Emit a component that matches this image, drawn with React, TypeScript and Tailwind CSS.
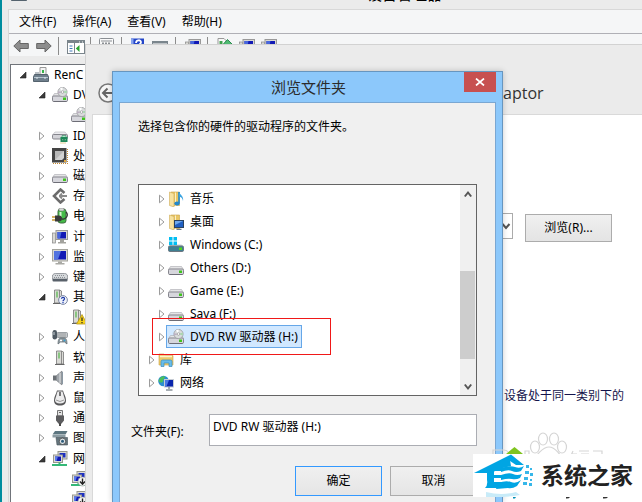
import type { ReactNode } from "react";

type TreeItem = {
  label: string;
  icon: ReactNode;
  level: number;
  state?: "open" | "closed";
};

type FolderItem = {
  label: string;
  icon: ReactNode;
  root?: boolean;
  selected?: boolean;
};

function Icon({ children }: { children: ReactNode }) {
  return (
    <svg viewBox="0 0 16 16" className="w-4 h-4 shrink-0" aria-hidden="true">
      {children}
    </svg>
  );
}

const driveBody = (
  <>
    <path d="M2.5 6.5h11l2 3H.5z" fill="#e4e4e6" stroke="#a9a9ae" strokeWidth=".6" />
    <rect x=".5" y="9" width="15" height="5.500" rx="1.2" fill="#d6d6dc" stroke="#85858d" />
    <path d="M1.5 14.500h13" stroke="#6d6d76" />
    <rect x="11" y="10.5" width="3" height="2.5" fill="#3fc41c" />
  </>
);

const HardDrive = () => <Icon>{driveBody}</Icon>;

const DiscDrive = () => (
  <Icon>
    {driveBody}
    <circle cx="10.5" cy="5" r="4.6" fill="#d9dcdc" stroke="#9a9a9e" strokeWidth=".8" />
    <path d="M10.5 5 8 1.4a4.4 4.4 0 0 1 2.5-.8z" fill="#fff" />
    <path d="M10.5 5l4.1-1.6a4.4 4.4 0 0 1 0 3z" fill="#a9d8b0" />
    <path d="M10.5 5 6.4 6.6a4.4 4.4 0 0 1-.2-2.4z" fill="#bcaec2" />
    <circle cx="10.5" cy="5" r="1.3" fill="#fff" stroke="#888" strokeWidth=".6" />
  </Icon>
);

const WindowsDrive = () => (
  <Icon>
    <path d="M2.5 7.5h11l2 2H.5z" fill="#cbd4d8" />
    <rect x=".5" y="9" width="15" height="5.5" rx="1.2" fill="#3f7f92" stroke="#6d7780" />
    <rect x="11" y="10.5" width="3" height="2.5" fill="#55d81c" />
    <path d="M1 0h3.500v3.500H1zM5.500 0H9v3.500H5.500zM1 4.500h3.500V8H1zM5.500 4.500H9V8H5.500z" fill="#00bdf2" />
  </Icon>
);

const ComputerRoot = () => (
  <Icon>
    <path d="M7 .5h6V9H7z" fill="#f4f4f4" stroke="#999" />
    <path d="M10 3v3" stroke="#36b34a" strokeWidth="2" />
    <path d="M2 5h4v3H2z" fill="#b9bfc4" />
    <path d="M1.500 7.500h13l1 2.500v4.500H.5V10z" fill="#6f7f8c" stroke="#55636e" />
    <path d="M1 10.500h14" stroke="#b5c4cf" />
    <path d="M4 10v2M12 10v2" stroke="#dfe7ec" />
  </Icon>
);

const IdeController = () => (
  <Icon>
    <path d="M3 4h10l2.500 3H.5z" fill="#ececef" stroke="#b6b6ba" strokeWidth=".6" />
    <rect x=".5" y="6.500" width="15" height="4.500" rx="1.200" fill="#d3d3d8" stroke="#85858c" />
    <rect x="8.500" y="9" width="7" height="5" fill="#1d8a59" />
    <path d="M10 9V7.500h4V9M10 11h1.500v1.500H10zM12.500 11H14v1.500h-1.500z" fill="#a9e8c6" stroke="#1d6f4a" strokeWidth=".5" />
    <path d="M9 14.500v1M11 14.500v1M13 14.500v1" stroke="#c59a2d" />
  </Icon>
);

const Processor = () => (
  <Icon>
    <path d="M15.500 1v15M1 15.500h15" fill="none" stroke="#c58a32" strokeDasharray="1 1" />
    <rect x="0" y="0" width="14.500" height="14.500" fill="#444" />
    <path d="M3 3h9v7l-2 2H3z" fill="#d2d2d2" />
    <path d="M3 3h9L3 12z" fill="#b8b8b8" />
    <path d="M12 12h2v2h-2z" fill="#e0a53a" />
  </Icon>
);

const Storage = () => (
  <Icon>
    <path d="M12.500 5 8.500 1.500 2 8l6.500 6.500 4-3.500" fill="none" stroke="#6c6c6c" strokeWidth="2.600" />
    <path d="M7 8h8M7.500 8 10 5.500M7.500 8l2.500 2.500" fill="none" stroke="#8b8b8b" strokeWidth="1.800" />
  </Icon>
);

const Battery = () => (
  <Icon>
    <rect x="6" y="1" width="8" height="14" rx="2.500" fill="#45bb48" stroke="#3d6a3e" />
    <rect x="7" y="0" width="5" height="3" rx="1" fill="#d8dcd8" stroke="#777" strokeWidth=".6" />
    <path d="M8.500 4v5" stroke="#d5f7d0" strokeWidth="2" />
    <path d="M14 4c3 3 0 8-4 7" fill="none" stroke="#333" strokeWidth="1.300" />
    <path d="M3 7.500h4a3 3 0 0 1 0 6H3z" fill="#3a3a3a" />
    <path d="M0 9h3M0 12h3" stroke="#c69b33" strokeWidth="1.400" />
  </Icon>
);

const Monitor = () => (
  <Icon>
    <rect x=".5" y=".5" width="15" height="11.500" fill="#d9d9d4" stroke="#a3a39c" />
    <rect x="2" y="2" width="12" height="8.500" fill="#1119b5" />
    <path d="M2 2h7L6 10.500H2z" fill="#5273e0" />
    <path d="M6 12.500h4V14h2.500v1.500h-9V14H6z" fill="#a9a9a4" />
  </Icon>
);

const Desktop = () => (
  <Icon>
    <rect x=".5" y="4" width="3" height="10" fill="#d9d9d4" stroke="#888" strokeWidth=".7" />
    <rect x="4" y="1.500" width="11.500" height="9" fill="#d9d9d4" stroke="#999" />
    <rect x="5.500" y="3" width="8.500" height="6.500" fill="#1119b5" />
    <path d="M5.500 3h4L8 9.500H5.500z" fill="#4666dd" />
    <path d="M8 11h4v2h2v1.500H6V13h2z" fill="#a3a39e" />
  </Icon>
);

const Keyboard = () => (
  <Icon>
    <path d="M3.500 4.500h9a3 3 0 0 1 3 4v1.500H.5V8.500a3 3 0 0 1 3-4z" fill="#d6d9dc" stroke="#84888d" strokeWidth=".8" />
    <path d="M3 6.500h10M2 8.500h12" stroke="#8c9196" strokeDasharray="1 1" />
    <path d="M.5 10h15v1.500q0 1-1 1h-13q-1 0-1-1z" fill="#59616a" />
  </Icon>
);

const tower = (
  <>
    <path d="M4.500 1h5l2 1v12h-7z" fill="#dadad6" stroke="#777" strokeWidth=".8" />
    <path d="M9.500 1v13" stroke="#777" strokeWidth=".8" />
    <path d="M7 2.500v6" stroke="#52b848" strokeWidth="1.200" />
    <path d="M3 14.500h9.500" stroke="#666" />
  </>
);

const UnknownDevice = () => (
  <Icon>
    <g transform="translate(-2 0)">{tower}</g>
    <circle cx="11" cy="11" r="4.400" fill="#eef2fb" stroke="#7d88a5" />
    <path d="M9.500 9.800c0-2 3.200-1.800 3 0 0 1.200-1.500 1-1.500 2.400M11 13v1.200" fill="none" stroke="#1c39a8" strokeWidth="1.200" />
  </Icon>
);

const WarningDevice = () => (
  <Icon>
    <g transform="translate(-2 0)">{tower}</g>
    <path d="M11 5.500 16 15H5.500z" fill="#f6d21b" stroke="#b79512" strokeWidth=".8" />
    <path d="M11 8.500v3.500M11 13v1.200" stroke="#222" strokeWidth="1.200" />
  </Icon>
);

const SoftwareDevice = () => <Icon>{tower}</Icon>;

const HumanInterface = () => (
  <Icon>
    <rect x="5" y="3.500" width="10.500" height="5" rx="1" fill="#c4c8cb" stroke="#7d8388" strokeWidth=".7" />
    <path d="M6.500 5h8M6.500 7h8" stroke="#777" strokeDasharray="1 1" />
    <rect x=".5" y="1" width="4.500" height="9.500" rx="2.200" fill="#4f5a63" />
    <path d="M2 3v3" stroke="#c9d2d8" />
    <path d="M6 15c0-4 1-6 2.500-6h4c1.500 0 2.500 2 2.500 6l-2.500-2h-4z" fill="#8e999f" stroke="#59646b" strokeWidth=".7" />
    <path d="M9 10.500v2M8 11.500h2" stroke="#fff" />
    <circle cx="12.500" cy="11.500" r=".9" fill="#35a2d6" />
  </Icon>
);

const Speaker = () => (
  <Icon>
    <path d="M1 5.500h3.500v5H1z" fill="#6b7075" />
    <path d="M4.500 5.500 10 1v14l-5.500-4.500z" fill="#a3a8ad" stroke="#6f7479" strokeWidth=".6" />
    <path d="M8 3v10" stroke="#dfe2e4" />
    <path d="M10.500 2v12" stroke="#8a98a3" />
  </Icon>
);

const Mouse = () => (
  <Icon>
    <path d="M5 .5h6c1 4 3 6 3 10 0 3-2 5-6 5s-6-2-6-5c0-4 2-6 3-10z" fill="#58585a" />
    <path d="M5.500 1.500h5l2.500 8.500c0 2-1.500 3.500-5 3.500S3 12 3 10z" fill="#ececed" />
    <path d="M8 2v4" stroke="#555" strokeWidth="1.600" />
    <path d="M4 10l4 1.500L12 10" fill="none" stroke="#999" />
  </Icon>
);

const UsbPlug = () => (
  <Icon>
    <path d="M5.500.5h5V6h-5z" fill="#e3e3e3" stroke="#777" />
    <path d="M7 2.500h2" stroke="#666" />
    <path d="M4 5.500h8v5L10 13v.5H6V13l-2-2.500z" fill="#5c5c5e" />
    <path d="M8 13v3" stroke="#4c4c4c" strokeWidth="2" />
  </Icon>
);

const Imaging = () => (
  <Icon>
    <path d="M3 1h12.500l-2 3.500H.5z" fill="#5d7680" />
    <path d="M.5 5h13v2.500h-13z" fill="#8b9ba2" />
    <path d="M4 7.500h11.500V15H5z" fill="#65757d" stroke="#48545a" strokeWidth=".6" />
    <circle cx="10.500" cy="11.300" r="3.200" fill="#dfe6e9" stroke="#333" strokeWidth=".7" />
    <circle cx="10.500" cy="11.300" r="1.500" fill="#2f5d7c" />
  </Icon>
);

const networkPair = (
  <>
    <rect x="6" y=".5" width="9" height="7.500" fill="#dcdcd6" stroke="#96968e" />
    <rect x="7.500" y="2" width="6" height="4.500" fill="#1d2fc0" />
    <rect x="1.500" y="4" width="9" height="7.500" fill="#dcdcd6" stroke="#96968e" />
    <rect x="3" y="5.500" width="6" height="4.500" fill="#1018b4" />
    <path d="M3 5.500h3L4.500 10H3z" fill="#5a7be6" />
    <path d="M0 14h15M7.500 11.500v3" stroke="#35b877" strokeWidth="2" />
  </>
);

const NetworkAdapters = () => <Icon>{networkPair}</Icon>;

const DisabledAdapter = () => (
  <Icon>
    {networkPair}
    <rect x="7" y="6" width="9" height="9" rx="4.500" fill="#f5f5f5" stroke="#999" strokeWidth=".6" />
    <path d="M11.500 7.500v5.500M9 10.500l2.500 2.700 2.500-2.700" fill="none" stroke="#222" strokeWidth="1.400" />
  </Icon>
);

const folderBack = (
  <>
    <path d="M3 1h8.500v13.500H3z" fill="#e9c766" stroke="#c9a248" strokeWidth=".6" />
    <path d="M1.500 1 6 2.500V16l-4.500-1.500z" fill="#f7e2a0" stroke="#cfab55" strokeWidth=".6" />
    <path d="M7.500 1.500v13" stroke="#fbf0c8" />
  </>
);

const MusicFolder = () => (
  <Icon>
    {folderBack}
    <path d="M11 1v11" stroke="#2387c9" strokeWidth="1.600" />
    <path d="M11 1c1 3 5 4 4 9-.5-3-2-4-4-4.200z" fill="#3ba3e0" />
    <ellipse cx="9" cy="12.500" rx="2.700" ry="2" fill="#2387c9" />
  </Icon>
);

const DesktopFolder = () => (
  <Icon>
    {folderBack}
    <rect x="6.500" y="6.500" width="9" height="7" fill="#1f5fc2" stroke="#29425f" />
    <path d="M7 7h8l-8 4z" fill="#6ea8ee" />
    <path d="M8.500 15.300h5" stroke="#46586c" />
  </Icon>
);

const Libraries = () => (
  <Icon>
    <path d="M1 2h5l1.500 1.500H15V13H1z" fill="#ecca6a" stroke="#c9a248" strokeWidth=".6" />
    <path d="M2 4.500h12" stroke="#fdf3cf" strokeWidth="1.500" />
    <path d="M3 14.500V9.500Q3 8 4.500 8h8Q14 8 14 9.500v5h-3V11H6v3.500z" fill="#69bce8" stroke="#3b8dbd" strokeWidth=".7" />
  </Icon>
);

const Network = () => (
  <Icon>
    <circle cx="5.500" cy="6" r="5.300" fill="#2c8fd0" />
    <path d="M2 3c2-2 5-2 5-1S5 4 5 6s-3 2-4.500 0zM6 7l4-2v4l-3 2z" fill="#4cc05a" />
    <rect x="6.500" y="4.500" width="9" height="7.500" fill="#0a25ad" stroke="#c6ccd4" />
    <path d="M7 5h4l-2.500 6.500H7z" fill="#4c78e4" />
    <path d="M11 12v2M8 15h6.500" stroke="#8b929b" strokeWidth="1.500" />
  </Icon>
);

const devices: TreeItem[] = [
  { label: "RenC", icon: <ComputerRoot />, level: 0, state: "open" },
  { label: "DVD", icon: <DiscDrive />, level: 1, state: "open" },
  { label: "", icon: <DiscDrive />, level: 2 },
  { label: "IDE", icon: <IdeController />, level: 1, state: "closed" },
  { label: "处", icon: <Processor />, level: 1, state: "closed" },
  { label: "磁", icon: <HardDrive />, level: 1, state: "closed" },
  { label: "存", icon: <Storage />, level: 1, state: "closed" },
  { label: "电", icon: <Battery />, level: 1, state: "closed" },
  { label: "计", icon: <Desktop />, level: 1, state: "closed" },
  { label: "监", icon: <Monitor />, level: 1, state: "closed" },
  { label: "键", icon: <Keyboard />, level: 1, state: "closed" },
  { label: "其", icon: <UnknownDevice />, level: 1, state: "open" },
  { label: "", icon: <WarningDevice />, level: 2 },
  { label: "人", icon: <HumanInterface />, level: 1, state: "closed" },
  { label: "软", icon: <SoftwareDevice />, level: 1, state: "closed" },
  { label: "声", icon: <Speaker />, level: 1, state: "closed" },
  { label: "鼠", icon: <Mouse />, level: 1, state: "closed" },
  { label: "通", icon: <UsbPlug />, level: 1, state: "closed" },
  { label: "图", icon: <Imaging />, level: 1, state: "closed" },
  { label: "网", icon: <NetworkAdapters />, level: 1, state: "open" },
  { label: "", icon: <DisabledAdapter />, level: 2 },
  { label: "", icon: <DisabledAdapter />, level: 2 },
];

const folders: FolderItem[] = [
  { label: "音乐", icon: <MusicFolder /> },
  { label: "桌面", icon: <DesktopFolder /> },
  { label: "Windows (C:)", icon: <WindowsDrive /> },
  { label: "Others (D:)", icon: <HardDrive /> },
  { label: "Game (E:)", icon: <HardDrive /> },
  { label: "Sava (F:)", icon: <HardDrive /> },
  { label: "DVD RW 驱动器 (H:)", icon: <DiscDrive />, selected: true },
  { label: "库", icon: <Libraries />, root: true },
  { label: "网络", icon: <Network />, root: true },
];

const indents = ["pl-2", "pl-[27px]", "pl-[46px]"];

function Expander({ state }: { state?: "open" | "closed" }) {
  return (
    <svg viewBox="0 0 8 10" className="w-2 h-2.5 shrink-0" aria-hidden="true">
      {state === "open" && <path d="M7 2v6H1z" fill="#3a3a3a" stroke="#222" strokeWidth=".6" />}
      {state === "closed" && <path d="M1.500 1.200v7.600L6 5z" fill="#fff" stroke="#9b9b9b" />}
    </svg>
  );
}

function Separator() {
  return <div className="w-px h-[18px] bg-[#8c8c8c]" />;
}

function Toolbar() {
  return (
    <div className="h-[22px] shrink-0 pl-1 pt-0.5 flex items-center bg-[#f5f6f7]">
      <button type="button" aria-label="后退" className="w-4 mr-[7px]">
        <svg viewBox="0 0 16 14" className="w-4 h-3.5">
          <path d="M.8 7 7 1v3.500h8.300v5H7V13z" fill="#8d8d8d" stroke="#666" />
        </svg>
      </button>
      <button type="button" aria-label="前进" className="w-4 mr-1.5">
        <svg viewBox="0 0 16 14" className="w-4 h-3.5">
          <path d="M15.200 7 9 1v3.500H.7v5H9V13z" fill="#8d8d8d" stroke="#666" />
        </svg>
      </button>
      <Separator />
      <div className="flex items-center w-[31px] pl-2">
        <svg viewBox="0 0 18 16" className="w-[18px] h-4">
          <rect x=".5" y="2.500" width="17" height="13" fill="#fff" stroke="#7a858c" />
          <path d="M1 4h16" stroke="#7a858c" strokeWidth="2" />
          <path d="M12 4h1M15 4h1" stroke="#fff" />
          <path d="M7.500 5v10" stroke="#7a858c" />
          <path d="M2.500 8h3M2.500 10.500h3M2.500 13h3" stroke="#4078b8" />
          <path d="M12.500 7v7L8.800 10.500z" fill="#2aa52f" />
        </svg>
      </div>
      <Separator />
      <div className="flex items-center w-[30px] pl-2">
        <svg viewBox="0 0 16 16" className="w-4 h-4">
          <rect x=".5" y=".5" width="14" height="14" rx="1" fill="#fafafa" stroke="#8b8f94" />
          <path d="M2 3h11" stroke="#8b8f94" />
          <path d="M3 5.500h9" stroke="#8b8f94" strokeWidth="2" strokeDasharray="2 1" />
        </svg>
      </div>
      <Separator />
      <div className="flex items-center gap-1.5 w-[53px] pl-2">
        <svg viewBox="0 0 16 16" className="w-4 h-4">
          <rect x="1" y=".5" width="13" height="15" fill="#2446c8" />
          <path d="M1 .5h2.500v15H1z" fill="#86a2ee" />
          <path d="M6 5c0-3.500 5-3.500 5-.8 0 2-2.400 2-2.400 4.300" fill="none" stroke="#fff" strokeWidth="1.800" />
        </svg>
        <svg viewBox="0 0 16 16" className="w-4 h-4">
          <rect x=".5" y="3.500" width="15" height="11" fill="#fff" stroke="#7a858c" />
          <path d="M1 4.500h14" stroke="#7a858c" strokeWidth="2" />
        </svg>
      </div>
      <Separator />
      <div className="flex items-center w-[31px] pl-[9px]">
        <Desktop />
      </div>
      <Separator />
      <div className="flex items-center gap-1.5 pl-[9px]">
        <svg viewBox="0 0 16 16" className="w-4 h-4">
          <path d="M1 .5h6l2 2V14H1z" fill="#f8f8f8" stroke="#999" />
          <path d="M2.500 3h3v3h-3z" fill="#3fa24c" />
          <path d="M10.500 1.500 16 7h-3v6H8V7H5.500z" fill="#4fba72" stroke="#2c8850" />
        </svg>
        <Desktop />
        <Desktop />
      </div>
    </div>
  );
}

function DeviceManager() {
  return (
    <div className="h-full flex flex-col border-l-2 border-[#008c9e] bg-[#ebebeb]">
      <div className="h-[9px] shrink-0 overflow-hidden flex items-end pl-[9px]">
        <div className="h-[23px] shrink-0 flex items-start">
          <ComputerRoot />
        </div>
        <h1 className="pl-[340px] pb-[5px] text-[15px] leading-5 shrink-0">设备管理器</h1>
      </div>
      <div className="flex-1 ml-[6px] border-l border-t border-[#d8d8d8] flex flex-col">
        <nav className="h-6 shrink-0 pl-2.5 flex items-center gap-4 bg-[#f5f6f7] border-b border-[#b0b0b6]">
          <button type="button">文件(F)</button>
          <button type="button">操作(A)</button>
          <button type="button">查看(V)</button>
          <button type="button">帮助(H)</button>
        </nav>
        <Toolbar />
        <div className="mt-2 ml-px border-l border-t border-[#70747a] bg-white">
          <ul className="h-[444px] grid auto-rows-fr">
            {devices.map((device, i) => (
              <li key={i} className={`flex items-center ${indents[device.level]}`}>
                <Expander state={device.state} />
                <span className="ml-1.5 mr-[5px]">{device.icon}</span>
                <span className="whitespace-nowrap">{device.label}</span>
              </li>
            ))}
          </ul>
        </div>
      </div>
    </div>
  );
}

function DriverWizard() {
  return (
    <div className="absolute left-[85px] top-11 right-0 bottom-0 flex flex-col bg-[#ebebeb] border-t border-l border-[#d2d2d2]">
      <header className="h-[69px] shrink-0 pt-[38px] pl-3 flex items-start">
        <button type="button" aria-label="后退">
          <svg viewBox="0 0 20 20" className="w-5 h-5">
            <circle cx="10" cy="10" r="9" fill="#f7f7f7" stroke="#777" strokeWidth="1.500" />
            <path d="M16 10H5M9.500 5.500 5 10l4.500 4.500" fill="none" stroke="#666" strokeWidth="2" />
          </svg>
        </button>
        <h2 className="ml-[385px] text-base leading-5 text-[#333] font-['Open_Sans',sans-serif]">aptor</h2>
      </header>
      <main className="flex-1 ml-1.5 bg-white border-t border-l border-[#d9d9d9]">
        <div className="pt-[98px] pl-8 flex items-start">
          <select aria-label="搜索位置" className="appearance-none w-[388px] h-[26px] border border-[#ababab] bg-white" />
          <svg viewBox="0 0 10 10" className="w-2.5 h-2.5 -ml-3 mt-2 mr-[14px]" aria-hidden="true">
            <path d="M1.500 3 5 7l3.500-4" fill="none" stroke="#555" strokeWidth="2" />
          </svg>
          <button type="button" className="w-[87px] h-7 mt-px border border-[#acacac] bg-linear-to-b from-[#f0f0f0] to-[#e4e4e4]">
            浏览(R)...
          </button>
        </div>
        <p className="mt-[146px] pl-[411px] text-[#14144c] whitespace-nowrap">设备处于同一类别下的</p>
      </main>
    </div>
  );
}

function FolderTree() {
  return (
    <div className="h-[212px] ml-[18px] mr-[18px] flex border border-[#646464] bg-white">
      <ul className="flex-1 pt-0.5">
        {folders.map((folder) => (
          <li key={folder.label} className={`h-[23px] flex items-center ${folder.root ? "pl-[9px]" : "pl-[19px]"}`}>
            <Expander state="closed" />
            <span
              className={`h-[23px] flex items-center gap-1.5 pl-px pr-[3px] border ${
                folder.selected ? "border-[#66a7e8] bg-[#d1e8ff]" : "border-transparent"
              }`}
            >
              {folder.icon}
              {folder.label}
            </span>
          </li>
        ))}
      </ul>
      <div className="w-4 pr-px flex flex-col bg-[#f0f0f0]">
        <button type="button" aria-label="向上滚动" className="h-[17px] flex items-center justify-center">
          <svg viewBox="0 0 8 8" className="w-2 h-2">
            <path d="M.8 6.500 4 2.500l3.200 4" fill="none" stroke="#555" strokeWidth="2" />
          </svg>
        </button>
        <div className="flex-1 pt-[69px]">
          <div className="h-[88px] bg-[#cdcdcd]" />
        </div>
        <button type="button" aria-label="向下滚动" className="h-[17px] flex items-center justify-center">
          <svg viewBox="0 0 8 8" className="w-2 h-2">
            <path d="M.8 1.500 4 5.500l3.200-4" fill="none" stroke="#555" strokeWidth="2" />
          </svg>
        </button>
      </div>
    </div>
  );
}

function BrowseDialog() {
  return (
    <div className="absolute left-28 top-[71px] bottom-0 w-[391px] flex flex-col border-t border-x border-[#6796c0] bg-[#8cc8fb] shadow-[0_0_6px_rgba(0,0,0,0.2)]">
      <header className="h-[30px] shrink-0 grid grid-cols-[1fr_auto_1fr] items-start pr-1.5 pl-2">
        <h2 className="col-start-2 text-[15px] leading-[30px] text-[#2b2b2b]">浏览文件夹</h2>
        <button type="button" aria-label="关闭" className="justify-self-end w-8 h-5 flex items-center justify-center bg-[#c75050]">
          <svg viewBox="0 0 10 8" className="w-2.5 h-2">
            <path d="M1 .5 9 7.500M9 .5 1 7.500" stroke="#fff" strokeWidth="1.700" />
          </svg>
        </button>
      </header>
      <div className="flex-1 mx-1.5 border-t border-x border-[#7aa7d2] bg-[#f0f0f0]">
        <p className="pt-[15px] pl-[18px] pb-12 leading-[18px]">选择包含你的硬件的驱动程序的文件夹。</p>
        <FolderTree />
        <div className="mt-[18px] pl-[11px] pr-[18px] flex items-start">
          <label htmlFor="folder" className="w-[78px] pt-[9px] leading-[18px]">
            文件夹(F):
          </label>
          <input
            id="folder"
            defaultValue="DVD RW 驱动器 (H:)"
            className="flex-1 min-w-0 h-8 pl-[3px] pb-2 border border-[#abadb3] bg-white outline-none"
          />
        </div>
        <div className="mt-5 pr-[18px] flex justify-end gap-2">
          <button type="button" className="w-[87px] h-[30px] border border-[#3399ff] bg-linear-to-b from-[#f0f0f0] to-[#e5e5e5]">
            确定
          </button>
          <button type="button" className="w-[87px] h-[30px] border border-[#acacac] bg-linear-to-b from-[#f0f0f0] to-[#e5e5e5]">
            取消
          </button>
        </div>
      </div>
      {/* red marker around the drive to pick */}
      <div className="absolute left-[39px] top-[246px] w-[179px] h-[37px] border border-[#f01818]" />
    </div>
  );
}

function Watermark() {
  return (
    <div className="absolute left-[473px] top-[430px] w-[169px] h-[72px]">
      <svg viewBox="0 0 169 72" className="absolute inset-0 w-full h-full" aria-hidden="true">
        <g fill="#fff" fillOpacity=".7" stroke="#d5d5d5" strokeWidth="1.200">
          <ellipse cx="62" cy="17" rx="4.500" ry="6" />
          <ellipse cx="70" cy="9" rx="4.500" ry="6" />
          <ellipse cx="81" cy="9" rx="4.500" ry="6" />
          <ellipse cx="89" cy="17" rx="4.500" ry="6" />
          <path d="M76 17c6 0 13 9 14 14H61c1-5 9-14 15-14z" />
          <path d="M20 30V20h11q6 0 5 9M52 30v-9h4v9M96 30l4-9M99 24h5M106 21h10M108 24h8M120 21h9v9M124 25h4" fill="none" />
        </g>
        <path d="M33 24 41.500 17 50 24z" fill="#7fc41f" />
      </svg>
      <div className="absolute inset-x-0 top-6 h-[43px] bg-white flex items-center">
        <svg viewBox="0 0 62 43" className="w-[62px] h-[43px] shrink-0" aria-hidden="true">
          <path d="M1 19 38 .5 51 11H43l-6-4L19 19z" fill="#00a5e3" />
          <path d="M14 17 37 6l1 6-8 2v3H21v4h9v3h-9v4h9l-2 6H12q3-3 2-8z" fill="#00a5e3" />
          <path d="M28 14q9-3 14-1t9-1l-3 5q-5 2-9 0t-11 1zM28 21q8-3 12-1t9 0l-2 4q-4 2-8 1t-11 1zM25 29q8-3 13-1t10-2l-4 6q-5 3-9 2l-12 1z" fill="#00a5e3" />
          <path d="M53 11h3v3h-3zM57 14h2v2h-2zM52 17h4v3h-4zM57 19h3v3h-3zM51 23h4v3h-4zM57 25h2v2h-2zM50 28h4v3h-4zM56 29h3v3h-3z" fill="#37b7e9" />
          <path d="M13 38q16 4 30 0l4 3q-17 3-34 2z" fill="#c8ebf8" />
        </svg>
        <strong className="ml-1.5 text-[23px] leading-none text-[#222] whitespace-nowrap">系统之家</strong>
      </div>
      <svg viewBox="0 0 169 3" className="absolute left-0 bottom-0.5 w-full h-[3px]" aria-hidden="true">
        <path d="M40 0h3l-1 1.500h-2z" fill="#008eb5" />
        <path d="M93 0h4q-1 1.800-4 1.500zM130 0h5q-1 1.800-5 1.500z" fill="#333" />
      </svg>
    </div>
  );
}

export default function App() {
  return (
    <div className="relative h-screen overflow-hidden bg-[#ebebeb] text-xs text-black font-['Noto_Sans','Noto_Sans_CJK_SC',sans-serif]">
      <DeviceManager />
      <DriverWizard />
      <BrowseDialog />
      <Watermark />
    </div>
  );
}
